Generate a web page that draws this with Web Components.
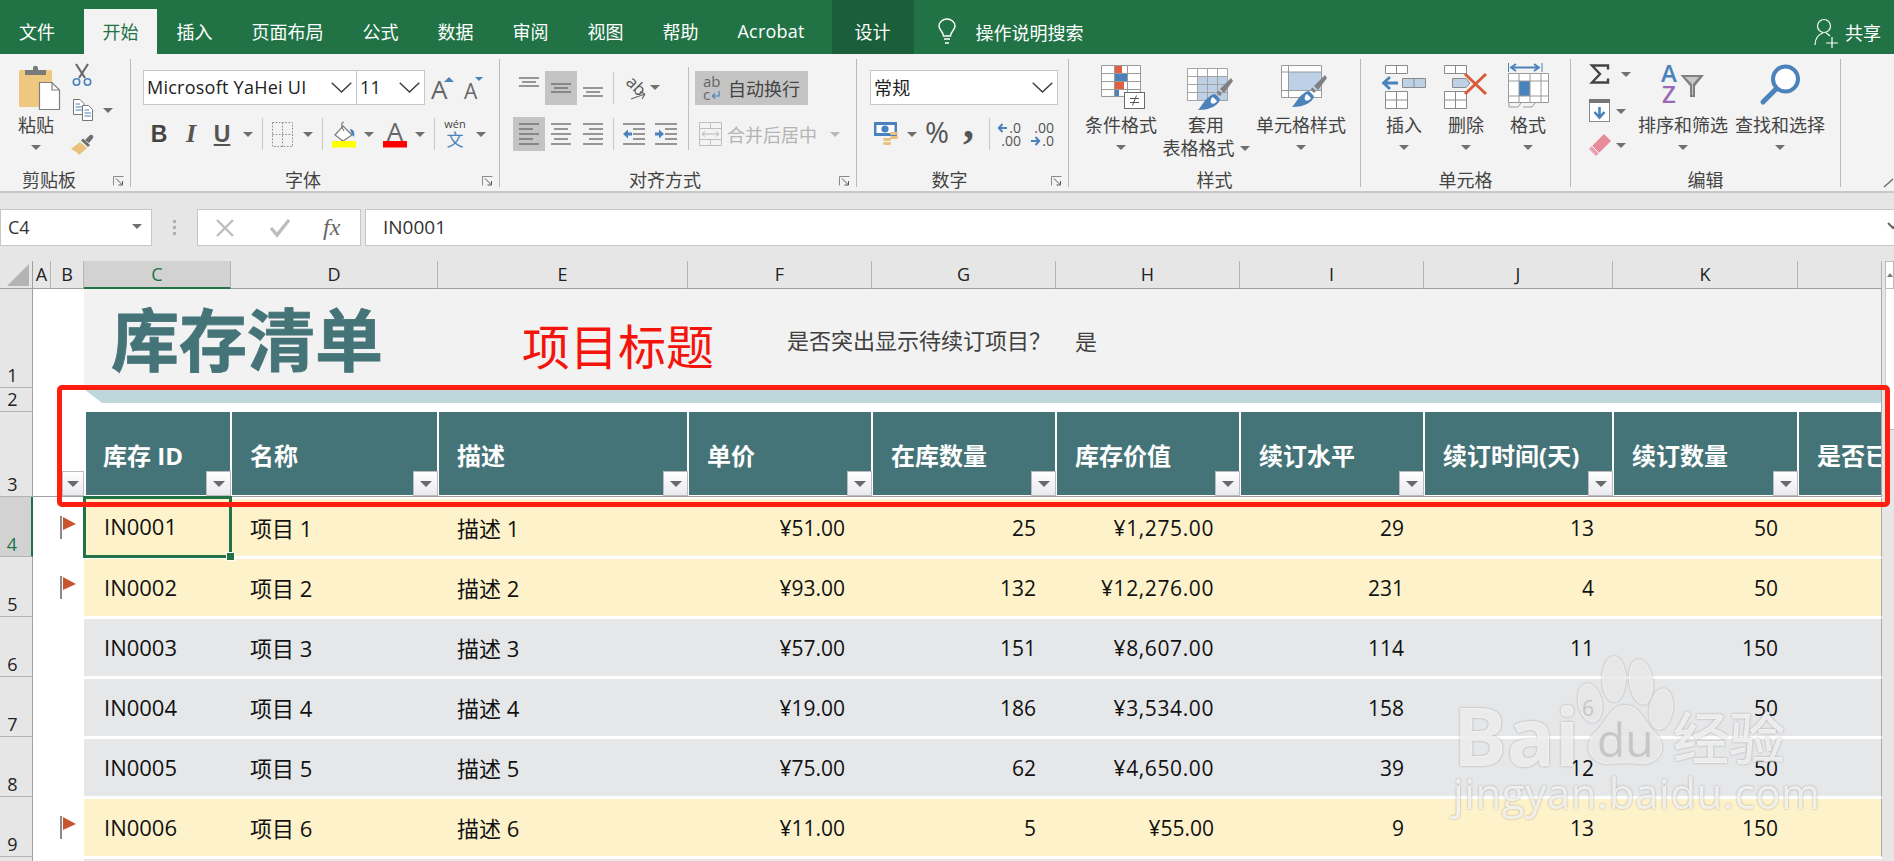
<!DOCTYPE html>
<html lang="zh-CN">
<head>
<meta charset="utf-8">
<title>库存清单</title>
<style>
  html, body { margin: 0; padding: 0; overflow: hidden; background: #fff; }
  body { width: 1894px; height: 861px; font-family: "Open Sans", "Noto Sans CJK SC", sans-serif; }
</style>
</head>
<body>
<xl-app></xl-app>
<script>
const FONT = `"Open Sans", "Noto Sans CJK SC", sans-serif`;
const BLUE = '#4a82bb';

const svg = (w, h, inner, style = '') =>
  `<svg xmlns="http://www.w3.org/2000/svg" width="${w}" height="${h}" viewBox="0 0 ${w} ${h}" style="display:block;flex:none;overflow:visible;${style}">${inner}</svg>`;

const lines = (rows) => rows.map(([x1, x2, y]) =>
  `<line x1="${x1}" x2="${x2}" y1="${y}" y2="${y}" stroke="#6e6e6e" stroke-width="1.4"/>`).join('');

const brush = `
  <path d="M44 10 L33 21 L37 25 L46 13 Z" fill="#808080"/>
  <path d="M31.5 22.5 L35 26 L33 28 L29.5 24.5 Z" fill="#808080"/>
  <path d="M28 26 L33 31 C32 37 24 42 11 42 C15 38 17 32 22 29 C24 27 26 26 28 26 Z" fill="${BLUE}"/>
  <path d="M26 29 L30 33 C28 36 26 36 24 35 C23 33 24 30 26 29 Z" fill="#fff"/>`;

const ICONS = {
  paste: svg(41, 45, `
    <rect x="0" y="5" width="33" height="37" rx="1.5" fill="#edc87e"/>
    <path d="M6 5 H14 V3 C14 0 19 0 19 3 V5 H27 V10 H6 Z" fill="#7a7a7a"/>
    <path d="M20.5 17.5 H33 L40.5 25 V44.5 H20.5 Z" fill="#fff" stroke="#7f7f7f" stroke-width="1.2"/>
    <path d="M33 17.5 V25 H40.5" fill="none" stroke="#7f7f7f" stroke-width="1.2"/>`),
  cut: svg(20, 22, `
    <path d="M4 0 L13 14 M16 0 L7 14" stroke="#6a6a6a" stroke-width="2.2" fill="none"/>
    <circle cx="4.5" cy="18" r="3.2" fill="none" stroke="${BLUE}" stroke-width="1.6"/>
    <circle cx="15.5" cy="18" r="3.2" fill="none" stroke="${BLUE}" stroke-width="1.6"/>`),
  copy: svg(20, 22, `
    <path d="M.5 .5 H7 L11 4.5 V15.5 H.5 Z" fill="#fff" stroke="#777"/>
    <path d="M2.5 5 H7 M2.5 8 H9 M2.5 11 H9" stroke="${BLUE}"/>
    <path d="M9.5 6.5 H15.5 L19.5 10.5 V21.5 H9.5 Z" fill="#fff" stroke="#777"/>
    <path d="M11.5 11 H16 M11.5 14 H18 M11.5 17 H18" stroke="${BLUE}"/>`),
  painter: svg(23, 21, `
    <path d="M9 8 L16 14 L8 21 C7 19 4 17 0 15 Z" fill="#e9c27c"/>
    <path d="M10 6.5 L17 13 L19 11 L12 4.5 Z" fill="#6e6e6e"/>
    <path d="M14 6 L19 1 C21 0 23 2 22 4 L18 9 Z" fill="#6e6e6e"/>`),
  launcher: svg(11, 10, `
    <path d="M.5 9.5 V.5 H10.5" fill="none" stroke="#8a8a8a"/>
    <path d="M3 2.5 L9 8.5 M9.5 5 V9 H5.5" fill="none" stroke="#555"/>`),
  chevron: svg(21, 11, `<path d="M.7 .7 L10.5 10 L20.3 .7" fill="none" stroke="#3a3a3a" stroke-width="1.4"/>`),
  grow: svg(24, 22, `<text x="0" y="22" font-family="Open Sans" font-size="26" fill="#666">A</text><path d="M13 5 L18 0 L23 5 Z" fill="${BLUE}"/>`),
  shrink: svg(20, 22, `<text x="0" y="22" font-family="Open Sans" font-size="21" fill="#666">A</text><path d="M11 0 H19 L15 4 Z" fill="${BLUE}"/>`),
  border: svg(21, 25, `<path d="M.5 .5 H20.5 V24.5 H.5 Z M10.5 .5 V24.5 M.5 12.5 H20.5" fill="none" stroke="#8a8a8a" stroke-dasharray="1.6 1.6"/>`),
  fill: svg(24, 25, `
    <path d="M11 4 L20 13 L11 19 L3 13 Z" fill="#fff" stroke="#7a7a7a" stroke-width="1.2"/>
    <path d="M12 0 C9 0 9 5 12 9" fill="none" stroke="#7a7a7a" stroke-width="1.2"/>
    <path d="M18 7 C22 7 23 11 22 15 C20 13 19 11 18 7 Z" fill="${BLUE}"/>
    <rect x="0" y="19" width="24" height="6.5" fill="#ffff00"/>`),
  color: svg(24, 25, `
    <text x="12" y="19" text-anchor="middle" font-family="Open Sans" font-size="26" fill="#666">A</text>
    <rect x="0" y="19" width="24" height="6.5" fill="#ff0000"/>`),
  wen: svg(24, 28, `
    <text x="12" y="8" text-anchor="middle" font-family="Open Sans" font-size="11" fill="#444">wén</text>
    <text x="12" y="26" text-anchor="middle" font-family="Noto Sans CJK SC" font-size="17" fill="${BLUE}">文</text>`),
  atop: svg(20, 10, lines([[0, 20, 1], [3, 17, 5], [0, 20, 9]])),
  amid: svg(20, 10, lines([[0, 20, 1], [3, 17, 5], [0, 20, 9]])),
  abot: svg(20, 10, lines([[0, 20, 1], [3, 17, 5], [0, 20, 9]])),
  left: svg(20, 22, lines([[0, 20, 1], [0, 14, 6], [0, 20, 11], [0, 14, 16], [0, 20, 21]])),
  center: svg(20, 22, lines([[0, 20, 1], [3, 17, 6], [0, 20, 11], [3, 17, 16], [0, 20, 21]])),
  right: svg(20, 22, lines([[0, 20, 1], [6, 20, 6], [0, 20, 11], [6, 20, 16], [0, 20, 21]])),
  orient: svg(24, 26, `
    <text x="2" y="8" transform="rotate(45 2 8)" font-family="Open Sans" font-size="17" fill="#555">ab</text>
    <path d="M8 24 L22 19 M22 19 L17 16.5 M22 19 L19 24" fill="none" stroke="#666" stroke-width="1.2"/>`),
  outdent: svg(22, 22, `${lines([[0, 22, 1], [10, 22, 6], [10, 22, 11], [10, 22, 16], [0, 22, 21]])}<path d="M0 11 L5 6.5 V9.5 H9 V12.5 H5 V15.5 Z" fill="${BLUE}"/>`),
  indent: svg(22, 22, `${lines([[0, 22, 1], [10, 22, 6], [10, 22, 11], [10, 22, 16], [0, 22, 21]])}<path d="M9 11 L4 6.5 V9.5 H0 V12.5 H4 V15.5 Z" fill="${BLUE}"/>`),
  wrap: svg(18, 24, `
    <text x="0" y="11" font-family="Open Sans" font-size="15" fill="#666">ab</text>
    <text x="0" y="24" font-family="Open Sans" font-size="15" fill="#666">c</text>
    <path d="M16 15 V20 H10 M12 17.5 L9.5 20 L12 22.5" fill="none" stroke="${BLUE}" stroke-width="1.2"/>`),
  merge: svg(23, 24, `
    <path d="M.5 .5 H22.5 V23.5 H.5 Z M.5 6.5 H22.5 M.5 17.5 H22.5 M11.5 .5 V6.5 M11.5 17.5 V23.5" fill="none" stroke="#c4bcc4"/>
    <path d="M3 12 H20 M6 9.5 L3 12 L6 14.5 M17 9.5 L20 12 L17 14.5" fill="none" stroke="#b8b8b8"/>`),
  money: svg(24, 24, `
    <rect x="0" y="0" width="23" height="14" fill="${BLUE}"/>
    <rect x="2.5" y="3" width="18" height="8" fill="#fff"/>
    <circle cx="11" cy="7" r="3.6" fill="${BLUE}"/>
    <g fill="#e8c27e"><rect x="16" y="10" width="8" height="3" rx="1.4"/><rect x="16" y="14" width="8" height="3" rx="1.4"/><rect x="9" y="16" width="8" height="3" rx="1.4"/><rect x="9" y="20" width="8" height="3" rx="1.4"/></g>`),
  decInc: svg(23, 24, `
    <text x="23" y="11" text-anchor="end" font-family="Open Sans" font-size="14" fill="#555">.0</text>
    <text x="23" y="24" text-anchor="end" font-family="Open Sans" font-size="14" fill="#555">.00</text>
    <path d="M9 6 H1 M4.5 2 L.8 6 L4.5 10" fill="none" stroke="${BLUE}" stroke-width="2"/>`),
  decDec: svg(23, 24, `
    <text x="23" y="11" text-anchor="end" font-family="Open Sans" font-size="14" fill="#555">.00</text>
    <text x="23" y="24" text-anchor="end" font-family="Open Sans" font-size="14" fill="#555">.0</text>
    <path d="M0 19 H8 M4.5 15 L8.2 19 L4.5 23" fill="none" stroke="${BLUE}" stroke-width="2"/>`),
  cond: svg(44, 44, `
    <rect x=".5" y=".5" width="39" height="31" fill="#fff"/>
    <rect x="13" y="0" width="8" height="8" fill="#e0603f"/><rect x="13" y="8" width="13" height="8" fill="${BLUE}"/>
    <rect x="13" y="16" width="10" height="8" fill="#e0603f"/><rect x="13" y="24" width="5" height="8" fill="${BLUE}"/>
    <path d="M.5 .5 H39.5 V31.5 H.5 Z M.5 8.5 H39.5 M.5 16.5 H39.5 M.5 24.5 H39.5 M13.5 .5 V31.5 M26.5 .5 V31.5" fill="none" stroke="#9a9a9a"/>
    <rect x="23.5" y="27.5" width="20" height="16" fill="#fff" stroke="#6a6a6a"/>
    <path d="M29 33.5 H38 M29 37.5 H38 M35.5 30.5 L31.5 40.5" stroke="#555" fill="none"/>`),
  table: svg(46, 44, `
    <rect x=".5" y=".5" width="40" height="32" fill="#fff"/>
    <rect x="11" y="8" width="30" height="25" fill="#bdd0e6"/>
    <path d="M.5 .5 H40.5 V32.5 H.5 Z M.5 8.5 H40.5 M.5 16.5 H40.5 M.5 24.5 H40.5 M10.5 .5 V32.5 M20.5 .5 V32.5 M30.5 .5 V32.5" fill="none" stroke="#a4a4a4"/>
    ${brush}`),
  cell: svg(46, 44, `
    <rect x=".5" y=".5" width="40" height="32" fill="#fff"/>
    <rect x="7" y="7" width="34" height="18" fill="#bdd0e6"/>
    <path d="M.5 .5 H40.5 V32.5 H.5 Z M.5 7 H40.5 M.5 25.5 H40.5 M7.5 .5 V32.5" fill="none" stroke="#9a9a9a"/>
    ${brush}`),
  insert: svg(44, 44, `
    <path d="M3.5 .5 H25.5 V8.5 H3.5 Z M14.5 .5 V8.5 M3.5 26.5 H25.5 V43.5 H3.5 Z M14.5 26.5 V43.5 M3.5 35 H25.5" fill="#fff" stroke="#8a8a8a"/>
    <path d="M20.5 13.5 H43.5 V22.5 H20.5 Z M32 13.5 V22.5" fill="#bdd0e6" stroke="#8a8a8a"/>
    <path d="M16 18 H2 M8 12 L1.5 18 L8 24" fill="none" stroke="${BLUE}" stroke-width="2.8"/>`),
  del: svg(44, 44, `
    <path d="M.5 .5 H22.5 V8.5 H.5 Z M11.5 .5 V8.5 M.5 26.5 H22.5 V43.5 H.5 Z M11.5 26.5 V43.5 M.5 35 H22.5" fill="#fff" stroke="#8a8a8a"/>
    <path d="M8.5 13.5 H22 L26 18 L22 22.5 H8.5 Z" fill="#bdd0e6" stroke="#8a8a8a"/>
    <path d="M21 9 L42 29 M42 9 L21 29" stroke="#d95b3a" stroke-width="3" fill="none"/>`),
  format: svg(41, 45, `
    <path d="M.5 0 V9 M34 0 V9" stroke="${BLUE}"/>
    <path d="M3 4.5 H31 M8 1 L3 4.5 L8 8 M26 1 L31 4.5 L26 8" fill="none" stroke="${BLUE}" stroke-width="1.8"/>
    <rect x=".5" y="10.5" width="40" height="29" fill="#fff"/>
    <rect x="11" y="18" width="11" height="15" fill="${BLUE}"/>
    <path d="M.5 10.5 H40.5 V39.5 H.5 Z M.5 18 H40.5 M.5 33 H40.5 M11 10.5 V39.5 M22 10.5 V39.5 M33 10.5 V39.5" fill="none" stroke="#9a9a9a"/>
    <path d="M1 40 V44 H10 L13 40 M15 44 H24 L27 40" fill="none" stroke="#9a9a9a"/>`),
  sum: svg(19, 20, `<path d="M18 5.5 V1.5 H2 L10 10 L2 18.5 H18 V14.5" fill="none" stroke="#444" stroke-width="2.4"/>`),
  filldown: svg(21, 23, `
    <rect x=".5" y=".5" width="20" height="22" fill="#fff" stroke="#8a8a8a"/>
    <rect x="0" y="0" width="21" height="4" fill="#777"/>
    <path d="M10.5 8 V18 M5.5 13 L10.5 18.5 L15.5 13" fill="none" stroke="${BLUE}" stroke-width="2.6"/>`),
  eraser: svg(22, 22, `
    <path d="M15 0 L22 7 L10 19 L3 12 Z" fill="#e88c9c"/>
    <path d="M3 12 L10 19 L7 22 L0 15 Z" fill="#eb9fad"/><path d="M3 12 L10 19" stroke="#fff"/>`),
  sort: svg(44, 40, `
    <text x="8" y="17" text-anchor="middle" font-family="Open Sans" font-size="24" font-weight="600" fill="${BLUE}">A</text>
    <text x="8" y="38" text-anchor="middle" font-family="Open Sans" font-size="24" font-weight="600" fill="#9a68b8">Z</text>
    <path d="M19.5 10 H43 L34 21 V32 H29 V21 Z" fill="#808080"/><path d="M24 12 H38 L32 19 V30 H31 V19 Z" fill="#c8c8c8"/>`),
  find: svg(40, 40, `
    <circle cx="25.5" cy="14" r="12.5" fill="#fff" stroke="${BLUE}" stroke-width="4"/>
    <path d="M16 24 L3 37" stroke="${BLUE}" stroke-width="5" stroke-linecap="round"/>`),
  bulb: svg(18, 28, `<path d="M5.5 18 C5 13 1 12 1 8 C1 4 5 1 9 1 C13 1 17 4 17 8 C17 12 13 13 12.5 18 Z M6 21 H12 M7 25 H11" fill="none" stroke="#fff" stroke-width="1.5"/>`),
  person: svg(24, 28, `<circle cx="10" cy="8" r="6.5" fill="none" stroke="#fff" stroke-width="1.2"/><path d="M1 27 C1 20 5 16 9 15 M12 15 C14 16 15 17 16 18 M18 19 V30 M12 25 H24" fill="none" stroke="#fff" stroke-width="1.2"/>`),
  flag: svg(16, 23, `<rect x="0" y="0" width="2" height="23" fill="#8a8a8a"/><path d="M3 1 L16 8 L3 14 Z" fill="#c9552f"/>`),
  corner: svg(22, 22, `<path d="M22 0 V22 H0 Z" fill="#b4b4b4"/>`),
  collapse: svg(10, 8, `<path d="M0 8 L9 0" stroke="#666" stroke-width="1.4" fill="none"/>`),
};

class XlIcon extends HTMLElement {
  constructor() {
    super();
    this.attachShadow({ mode: 'open' });
  }

  connectedCallback() {
    this.shadowRoot.innerHTML = `
      <style>:host { display: flex; flex: none; align-items: center; justify-content: center; }</style>
      ${ICONS[this.getAttribute('name')] || ''}`;
  }
}
customElements.define('xl-icon', XlIcon);

class XlCaret extends HTMLElement {
  constructor() {
    super();
    this.attachShadow({ mode: 'open' }).innerHTML = `
      <style>
        :host { display: inline-flex; flex: none; align-items: center; justify-content: center; }
        i { display: block; width: 0; height: 0; border: 5px solid transparent; border-bottom: 0; border-top: 5px solid #707070; }
      </style>
      <i></i>`;
  }
}
customElements.define('xl-caret', XlCaret);

class XlGroup extends HTMLElement {
  constructor() {
    super();
    this.attachShadow({ mode: 'open' });
  }

  connectedCallback() {
    const launcher = this.hasAttribute('launcher');
    const pad = this.getAttribute('pad') || (launcher ? 26 : 0);
    this.shadowRoot.innerHTML = `
      <style>
        :host { display: flex; flex: none; flex-direction: column; position: relative; box-sizing: border-box; height: 128px; border-right: 1px solid #b9b9b9; }
        .body { flex: none; height: 114px; }
        .label { height: 14px; line-height: 14px; text-align: center; font-size: 18px; color: #444; white-space: nowrap; padding-right: ${pad}px; }
        xl-icon { position: absolute; right: 6px; bottom: 1px; }
      </style>
      <div class="body"><slot></slot></div>
      <div class="label">${this.getAttribute('label') || ''}</div>
      ${launcher ? '<xl-icon name="launcher"></xl-icon>' : ''}`;
  }
}
customElements.define('xl-group', XlGroup);

class XlBig extends HTMLElement {
  constructor() {
    super();
    this.attachShadow({ mode: 'open' });
  }

  connectedCallback() {
    const second = this.getAttribute('second');
    this.shadowRoot.innerHTML = `
      <style>
        :host { display: flex; flex: none; flex-direction: column; align-items: center; font-size: 18px; color: #444; white-space: nowrap; }
        .icon { height: 58px; box-sizing: border-box; padding-top: 6px; }
        .text { height: 16px; line-height: 16px; }
        .second { height: 16px; line-height: 16px; margin-top: 7px; display: flex; align-items: center; }
        .second xl-caret { margin-left: 5px; }
        .solo { margin-top: 12px; height: 5px; }
      </style>
      <div class="icon"><slot></slot></div>
      <div class="text">${this.getAttribute('label')}</div>
      ${second ? `<div class="second">${second}<xl-caret></xl-caret></div>` : '<xl-caret class="solo"></xl-caret>'}`;
  }
}
customElements.define('xl-big', XlBig);

class XlSelect extends HTMLElement {
  constructor() {
    super();
    this.attachShadow({ mode: 'open' });
  }

  connectedCallback() {
    this.shadowRoot.innerHTML = `
      <style>
        :host { display: flex; flex: none; box-sizing: border-box; height: 35px; align-items: center; justify-content: space-between; background: #fff; border: 1px solid #c6c6c6; padding: 0 4px 0 3px; font-size: 18px; color: #222; white-space: nowrap; }
        span { letter-spacing: .25px; margin-top: -2px; }
      </style>
      <span>${this.getAttribute('value')}</span><xl-icon name="chevron"></xl-icon>`;
  }
}
customElements.define('xl-select', XlSelect);

class XlTabs extends HTMLElement {
  constructor() {
    super();
    this.attachShadow({ mode: 'open' }).innerHTML = `
      <style>
        :host { display: flex; flex: none; height: 54px; background: #217346; color: #fff; font-size: 18px; white-space: nowrap; }
        .tab { display: flex; align-items: center; height: 45px; margin-top: 9px; padding: 0 19.5px 2px; box-sizing: border-box; }
        .first { padding-left: 19px; padding-right: 29px; }
        .active { background: #f3f3f3; color: #217346; padding: 0 18.5px 2px; }
        .acro { letter-spacing: .2px; }
        .design { height: 54px; margin: 0 0 0 4px; padding: 9px 23px 2px; background: #1b5e3a; }
        .help { display: flex; align-items: center; height: 45px; margin: 9px 0 0 24px; }
        .help span { margin-left: 20px; }
        .share { display: flex; align-items: center; height: 45px; margin: 9px 13px 0 auto; }
        .share span { margin-left: 7px; }
      </style>
      <div class="tab first">文件</div>
      <div class="tab active">开始</div>
      <div class="tab">插入</div>
      <div class="tab">页面布局</div>
      <div class="tab">公式</div>
      <div class="tab">数据</div>
      <div class="tab">审阅</div>
      <div class="tab">视图</div>
      <div class="tab">帮助</div>
      <div class="tab acro" style="padding-right:23px">Acrobat</div>
      <div class="tab design">设计</div>
      <div class="help"><xl-icon name="bulb"></xl-icon><span>操作说明搜索</span></div>
      <div class="share"><xl-icon name="person"></xl-icon><span>共享</span></div>`;
  }
}
customElements.define('xl-tabs', XlTabs);

class XlRibbon extends HTMLElement {
  constructor() {
    super();
    this.attachShadow({ mode: 'open' }).innerHTML = `
      <style>
        :host { display: flex; flex: none; box-sizing: border-box; height: 139px; padding-top: 5px; background: #f3f3f3; border-bottom: 2px solid #c8c8c8; }
        .row { display: flex; align-items: center; }
        .r1 { margin-top: 11px; height: 35px; }
        .r2 { margin-top: 12px; height: 34px; }
        .col { display: flex; flex-direction: column; }
        .sep { flex: none; width: 1px; height: 32px; background: #c8c8c8; }
        .tall { align-self: flex-start; height: 49px; margin-top: -3px; background: #c0c0c0; }
        .tall2 { background: #c0c0c0; height: 36px; margin-top: -4px; }
        .cell { display: flex; flex: none; align-items: center; justify-content: center; height: 34px; }
        .on { background: #c4c4c4; }
        .txt { display: flex; flex: none; align-items: center; font-size: 18px; color: #444; white-space: nowrap; }
        .glyph { display: flex; flex: none; align-items: center; justify-content: center; color: #444; }
        .flexrow { display: flex; }
        .small { display: flex; align-items: center; height: 35px; }
      </style>

      <xl-group label="剪贴板" launcher pad="32" style="width:131px">
        <div class="flexrow">
          <xl-big label="粘贴" style="width:72px"><xl-icon name="paste" style="margin-left:7px"></xl-icon></xl-big>
          <div class="col" style="padding-top:5px">
            <div class="small" style="align-items:flex-start"><xl-icon name="cut"></xl-icon></div>
            <div class="small" style="align-items:flex-start;margin-left:1px"><xl-icon name="copy"></xl-icon><xl-caret style="width:10px;margin:9px 0 0 10px"></xl-caret></div>
            <div class="small" style="align-items:flex-start;margin-left:-1px"><xl-icon name="painter"></xl-icon></div>
          </div>
        </div>
      </xl-group>

      <xl-group label="字体" launcher pad="24" style="width:369px">
        <div class="row r1" style="margin-left:12px">
          <xl-select value="Microsoft YaHei UI" style="width:214px"></xl-select>
          <xl-select value="11" style="width:69px;margin-left:-1px"></xl-select>
          <xl-icon name="grow" style="margin-left:6px"></xl-icon>
          <xl-icon name="shrink" style="margin-left:9px"></xl-icon>
        </div>
        <div class="row r2" style="margin-left:12px">
          <div class="glyph" style="width:32px;font:700 23px 'Liberation Sans',sans-serif">B</div>
          <div class="glyph" style="width:32px;font:italic 700 26px 'Liberation Serif',serif;color:#555">I</div>
          <div class="glyph" style="width:30px;font:700 23px 'Liberation Sans',sans-serif;text-decoration:underline;color:#555">U</div>
          <xl-caret style="width:22px"></xl-caret>
          <div class="sep" style="margin-left:3px"></div>
          <xl-icon name="border" style="margin-left:9px"></xl-icon>
          <xl-caret style="width:29px"></xl-caret>
          <div class="sep"></div>
          <xl-icon name="fill" style="margin-left:9px"></xl-icon>
          <xl-caret style="width:26px"></xl-caret>
          <xl-icon name="color" style="margin-left:1px"></xl-icon>
          <xl-caret style="width:26px"></xl-caret>
          <div class="sep" style="margin-left:1px"></div>
          <xl-icon name="wen" style="margin-left:8px"></xl-icon>
          <xl-caret style="width:28px"></xl-caret>
        </div>
      </xl-group>

      <xl-group label="对齐方式" launcher style="width:357px">
        <div class="row r1" style="margin-left:13px">
          <div class="cell" style="width:32px;align-items:flex-start;padding-top:6px;box-sizing:border-box"><xl-icon name="atop"></xl-icon></div>
          <div class="cell on" style="width:32px"><xl-icon name="amid"></xl-icon></div>
          <div class="cell" style="width:32px;align-items:flex-end;padding-bottom:8px;box-sizing:border-box"><xl-icon name="abot"></xl-icon></div>
          <div class="sep" style="margin-left:4px"></div>
          <div class="cell" style="width:30px;margin-left:6px"><xl-icon name="orient"></xl-icon></div>
          <xl-caret style="width:10px"></xl-caret>
          <div class="sep tall" style="margin-left:28px"></div>
          <div class="cell on txt" style="width:113px;margin-left:6px;justify-content:flex-start"><xl-icon name="wrap" style="margin-left:8px"></xl-icon><span style="margin-left:7px">自动换行</span></div>
        </div>
        <div class="row r2" style="margin-left:13px">
          <div class="cell on" style="width:32px"><xl-icon name="left"></xl-icon></div>
          <div class="cell" style="width:32px"><xl-icon name="center"></xl-icon></div>
          <div class="cell" style="width:32px"><xl-icon name="right"></xl-icon></div>
          <div class="sep" style="margin-left:4px"></div>
          <div class="cell" style="width:32px;margin-left:4px"><xl-icon name="outdent"></xl-icon></div>
          <div class="cell" style="width:32px"><xl-icon name="indent"></xl-icon></div>
          <div class="sep tall2" style="margin-left:6px"></div>
          <xl-icon name="merge" style="margin-left:10px"></xl-icon>
          <div class="txt" style="margin-left:5px;width:90px;color:#b4b4b4">合并后居中</div>
          <xl-caret style="width:36px;opacity:.45"></xl-caret>
        </div>
      </xl-group>

      <xl-group label="数字" launcher style="width:212px">
        <div class="row r1" style="margin-left:13px">
          <xl-select value="常规" style="width:188px"></xl-select>
        </div>
        <div class="row r2" style="margin-left:17px">
          <xl-icon name="money"></xl-icon>
          <xl-caret style="width:27px"></xl-caret>
          <div class="glyph" style="width:20px;margin-left:2px;padding-bottom:5px;font:29px 'Open Sans',sans-serif;color:#555">%</div>
          <div class="glyph" style="width:9px;margin-left:17px;font:700 44px/14px 'Liberation Serif',serif;color:#555;height:34px;align-items:flex-start">,</div>
          <div class="sep" style="margin-left:16px"></div>
          <xl-icon name="decInc" style="margin-left:8px"></xl-icon>
          <xl-icon name="decDec" style="margin-left:10px"></xl-icon>
        </div>
      </xl-group>

      <xl-group label="样式" style="width:292px">
        <div class="flexrow" style="margin-left:8px">
          <xl-big label="条件格式" style="width:88px"><xl-icon name="cond" style="margin-left:4px"></xl-icon></xl-big>
          <xl-big label="套用" second="表格格式" style="width:82px"><xl-icon name="table" style="margin:3px 0 0 8px"></xl-icon></xl-big>
          <xl-big label="单元格样式" style="width:100px;margin-left:4px"><xl-icon name="cell" style="margin-left:5px"></xl-icon></xl-big>
        </div>
      </xl-group>

      <xl-group label="单元格" style="width:210px">
        <div class="flexrow" style="margin-left:12px">
          <xl-big label="插入" style="width:62px"><xl-icon name="insert"></xl-icon></xl-big>
          <xl-big label="删除" style="width:62px"><xl-icon name="del"></xl-icon></xl-big>
          <xl-big label="格式" style="width:62px"><xl-icon name="format" style="margin:-2px 0 0 0"></xl-icon></xl-big>
        </div>
      </xl-group>

      <xl-group label="编辑" style="width:270px">
        <div class="flexrow" style="margin-left:18px">
          <div class="col" style="width:49px;padding-top:5px">
            <div class="small" style="align-items:flex-start"><xl-icon name="sum" style="margin-left:1px"></xl-icon><xl-caret style="width:10px;margin:8px 0 0 12px"></xl-caret></div>
            <div class="small" style="align-items:flex-start"><xl-icon name="filldown"></xl-icon><xl-caret style="width:10px;margin:10px 0 0 6px"></xl-caret></div>
            <div class="small" style="align-items:flex-start"><xl-icon name="eraser"></xl-icon><xl-caret style="width:10px;margin:9px 0 0 5px"></xl-caret></div>
          </div>
          <xl-big label="排序和筛选" style="width:90px"><xl-icon name="sort" style="margin-left:-1px"></xl-icon></xl-big>
          <xl-big label="查找和选择" style="width:90px;margin-left:7px"><xl-icon name="find"></xl-icon></xl-big>
        </div>
      </xl-group>

      <div style="flex:1;display:flex;align-items:flex-end;justify-content:flex-end;height:128px"><xl-icon name="collapse"></xl-icon></div>`;
  }
}
customElements.define('xl-ribbon', XlRibbon);

class XlFormula extends HTMLElement {
  constructor() {
    super();
    this.attachShadow({ mode: 'open' }).innerHTML = `
      <style>
        :host { display: flex; flex: none; box-sizing: border-box; height: 68px; padding: 16px 0 15px; background: #e6e6e6; font-size: 18px; color: #333; }
        .box { display: flex; align-items: center; box-sizing: border-box; height: 37px; background: #fff; border: 1px solid #c6c6c6; }
        .name { width: 152px; padding: 0 9px 2px 7px; justify-content: space-between; }
        .dots { width: 45px; display: flex; flex-direction: column; align-items: center; justify-content: center; gap: 3px; margin-left: 0; }
        .dots i { display: block; width: 3px; height: 3px; background: #b0b0b0; }
        .btns { width: 164px; }
        .fx { font: italic 24px "Liberation Serif", serif; color: #666; margin-left: 33px; }
        .input { flex: 1; margin-left: 4px; padding: 0 0 2px 17px; justify-content: space-between; border-right: 0; }
        .input span { font-size: 19px; }
      </style>
      <div class="box name"><span>C4</span><xl-caret></xl-caret></div>
      <div class="dots"><i></i><i></i><i></i></div>
      <div class="box btns">
        ${svg(18, 18, '<path d="M1 1 L17 17 M17 1 L1 17" stroke="#bdbdbd" stroke-width="2.4" fill="none"/>', 'margin-left:18px')}
        ${svg(20, 18, '<path d="M1 9 L7 16 L19 1" stroke="#bdbdbd" stroke-width="3.4" fill="none"/>', 'margin-left:36px')}
        <span class="fx">fx</span>
      </div>
      <div class="box input"><span>IN0001</span>${svg(6, 10, '<path d="M0 1 L5 6 L10 1" stroke="#666" stroke-width="2" fill="none"/>')}</div>`;
  }
}
customElements.define('xl-formula', XlFormula);

const WIDTHS = [33, 18, 33, 147, 207, 250, 184, 184, 184, 184, 189, 185, 84, 12];
const COLS = ['A', 'B', 'C', 'D', 'E', 'F', 'G', 'H', 'I', 'J', 'K', ''];
const HEADS = ['库存 ID', '名称', '描述', '单价', '在库数量', '库存价值', '续订水平', '续订时间(天)', '续订数量', '是否已'];
const ROWS = [
  ['IN0001', '项目 1', '描述 1', '¥51.00', '25', '¥1,275.00', '29', '13', '50', 1],
  ['IN0002', '项目 2', '描述 2', '¥93.00', '132', '¥12,276.00', '231', '4', '50', 1],
  ['IN0003', '项目 3', '描述 3', '¥57.00', '151', '¥8,607.00', '114', '11', '150', 0],
  ['IN0004', '项目 4', '描述 4', '¥19.00', '186', '¥3,534.00', '158', '6', '50', 0],
  ['IN0005', '项目 5', '描述 5', '¥75.00', '62', '¥4,650.00', '39', '12', '50', 0],
  ['IN0006', '项目 6', '描述 6', '¥11.00', '5', '¥55.00', '9', '13', '150', 1],
];
const RIGHT_PAD = { 3: 27, 4: 20, 5: 26, 6: 20, 7: 19, 8: 20 };

class XlSheet extends HTMLElement {
  constructor() {
    super();
    this.attachShadow({ mode: 'open' });
    this.shadowRoot.innerHTML = `
      <style>
        :host { display: grid; flex: none; position: relative; height: 600px; background: #fff; color: #111; font-size: 21px;
          grid-template-columns: ${WIDTHS.map(w => w + 'px').join(' ')};
          grid-template-rows: 28px 99px 24px 85px repeat(6, 60px) 4px; }
        div { box-sizing: border-box; min-width: 0; }
        .ch { display: flex; align-items: center; justify-content: center; background: #e6e6e6; border-right: 1px solid #b4b4b4; border-bottom: 1px solid #a0a0a0; font-size: 18px; color: #222; padding-bottom: 1px; }
        .ch.on { background: #d2d2d2; color: #217346; border-bottom: 2px solid #217346; }
        .corner { display: flex; align-items: flex-end; justify-content: flex-end; padding: 0 3px 2px 0; background: #e6e6e6; border-right: 1px solid #a0a0a0; border-bottom: 1px solid #a0a0a0; }
        .rh { display: flex; align-items: flex-end; justify-content: center; background: #e6e6e6; border-right: 1px solid #a0a0a0; border-bottom: 1px solid #b4b4b4; font-size: 18px; line-height: 23px; color: #222; padding-right: 7px; }
        .rh.on { background: #d2d2d2; color: #217346; border-right: 2px solid #217346; }
        .title { grid-column: 4 / 14; display: flex; align-items: center; background: #f2f2f2; border-right: 1px solid #a8a8a8; white-space: nowrap; }
        .title b { margin-left: 27px; font-size: 68px; line-height: 80px; color: #457478; font-weight: 700; margin-top: 2px; -webkit-text-stroke: .8px #457478; }
        .title .sub { margin-left: 139px; font-size: 48px; color: #f5140c; margin-top: 10px; }
        .title .q { margin-left: 73px; font-size: 22px; color: #404040; }
        .title .a { margin-left: 24px; font-size: 22px; color: #404040; margin-top: 3px; }
        .band { grid-column: 4 / 14; background: #fff; border-right: 1px solid #a8a8a8; }
        .band i { display: block; height: 14px; margin-top: 1px; background: #bdd7da; clip-path: polygon(0 0, 100% 0, 100% 100%, 18px 100%); }
        .hblank { border-bottom: 1px solid #a0a0a0; position: relative; }
        .hwrap { position: relative; border-bottom: 1px solid #a0a0a0; padding: 0 1px 1px 1px; background: #fff; }
        .hwrap.last { padding-right: 0; border-right: 1px solid #a8a8a8; }
        .hcell { display: flex; height: 100%; align-items: center; padding: 2px 0 0 18px; background: #457478; color: #fff; font-size: 24px; font-weight: 700; white-space: nowrap; overflow: hidden; }
        .hcell.first { margin-left: 1px; padding-left: 17px; }
        .filter { position: absolute; right: 0; bottom: 0; width: 25px; height: 25px; background: linear-gradient(#fff, #e9e9f0); border: 1px solid #bcbcbc; display: flex; align-items: center; justify-content: center; z-index: 1; }
        .filter i { display: block; width: 0; height: 0; border: 6px solid transparent; border-bottom: 0; border-top: 6px solid #6a6a6a; }
        .blank { display: flex; align-items: center; }
        .c { display: flex; align-items: center; white-space: nowrap; border-top: 2px solid #fff; border-bottom: 1px solid #fff; padding: 0 0 0 19px; position: relative; }
        .t { font-size: 22px; padding-bottom: 2px; }
        .y { background: #fef2cb; }
        .g { background: #e6e7e9; }
        .r { justify-content: flex-end; padding-left: 0; }
        .wide { letter-spacing: .6px; }
        .last { border-right: 1px solid #a8a8a8; }
        .sel { outline: 3px solid #217346; outline-offset: -2px; border: 0; z-index: 2; padding-bottom: 3px; }
        .sel i { position: absolute; right: -4px; bottom: -4px; width: 7px; height: 7px; background: #217346; border: 1px solid #fff; }
        .scroll { grid-column: 14; grid-row: 1 / -1; display: flex; flex-direction: column; background: #e6e6e6; }
        .sup { flex: none; height: 28px; margin-left: 3px; background: #fff; border: 1px solid #bbb; display: flex; align-items: center; justify-content: center; }
        .sup i { display: block; width: 0; height: 0; border: 3px solid transparent; border-top: 0; border-bottom: 4px solid #777; }
        .sth { flex: none; height: 141px; margin-left: 3px; background: #fff; border-left: 1px solid #ccc; border-bottom: 1px solid #bbb; }
        .frame { position: absolute; left: 57px; top: 124px; width: 1833px; height: 122px; box-sizing: border-box; border: 5px solid #ff1e0f; border-radius: 5px; z-index: 3; pointer-events: none; }
      </style>`;
    this.build();
  }

  build() {
    let html = '<div class="corner">' + ICONS.corner + '</div>';
    COLS.forEach(c => {
      html += `<div class="ch${c === 'C' ? ' on' : ''}">${c}</div>`;
    });
    html += '<div class="scroll"><div class="sup"><i></i></div><div class="sth"></div></div>';

    // top rows
    html += '<div class="rh">1</div><div></div><div></div>';
    html += '<div class="title"><b>库存清单</b><span class="sub">项目标题</span><span class="q">是否突出显示待续订项目？</span><span class="a">是</span></div>';
    html += '<div class="rh">2</div><div></div><div></div><div class="band"><i></i></div>';
    html += '<div class="rh">3</div><div class="hblank"></div><div class="hblank"><div class="filter" style="width:22px"><i></i></div></div>';
    HEADS.forEach((h, i) => {
      const last = i === HEADS.length - 1;
      html += `<div class="hwrap${last ? ' last' : ''}"><div class="hcell${i === 0 ? ' first' : ''}">${h}</div>${last ? '' : '<div class="filter"><i></i></div>'}</div>`;
    });

    // data rows
    ROWS.forEach((r, n) => {
      const cls = r[9] ? 'y' : 'g';
      html += `<div class="rh${n === 0 ? ' on' : ''}">${n + 4}</div><div></div>`;
      html += `<div class="blank" style="padding-left:9px">${r[9] ? ICONS.flag : ''}</div>`;
      html += `<div class="c t ${cls}${n === 0 ? ' sel' : ''}" style="padding-left:20px">${r[0]}${n === 0 ? '<i></i>' : ''}</div>`;
      html += `<div class="c t ${cls}">${r[1]}</div><div class="c t ${cls}">${r[2]}</div>`;
      for (let k = 3; k < 9; k++) {
        const wide = String(r[k]).includes(',') ? ' wide' : '';
        html += `<div class="c r ${cls}${wide}" style="padding-right:${RIGHT_PAD[k]}px">${r[k]}</div>`;
      }
      html += `<div class="c ${cls} last"></div>`;
    });

    // sliver of row 10
    html += '<div class="rh" style="border:0;border-right:1px solid #a0a0a0"></div><div></div><div></div>';
    html += '<div class="g" style="grid-column:4 / 14;border-top:2px solid #fff"></div>';

    html += '<div class="frame"></div>';
    this.shadowRoot.innerHTML += html;
  }
}
customElements.define('xl-sheet', XlSheet);

class XlWatermark extends HTMLElement {
  constructor() {
    super();
    this.attachShadow({ mode: 'open' }).innerHTML = `
      <style>
        :host { position: absolute; left: 1453px; top: 656px; width: 340px; height: 164px; z-index: 4; pointer-events: none; color: rgba(255,255,255,.78); font-family: "Open Sans", "Noto Sans CJK SC", sans-serif; white-space: nowrap; filter: drop-shadow(0 0 1px rgba(90,90,90,.6)); display: grid; grid-template-rows: 112px 52px; grid-template-columns: 114px 106px 120px; }
        .bai { grid-column: 1; align-self: end; font-size: 80px; line-height: 66px; font-weight: 700; }
        .paw { grid-column: 2; position: relative; left: 8px; top: 4px; }
        .paw span { position: absolute; left: 22px; top: 56px; font-size: 46px; line-height: 46px; color: rgba(130,130,130,.32); }
        .jing { grid-column: 3; align-self: end; font-size: 56px; line-height: 62px; font-weight: 500; }
        .url { grid-column: 1 / 4; font-size: 42px; line-height: 50px; letter-spacing: .6px; }
      </style>
      <div class="bai">Bai</div>
      <div class="paw">${svg(100, 108, `
        <g fill="rgba(255,255,255,.72)">
        <ellipse cx="15" cy="43" rx="12" ry="20" transform="rotate(-12 15 43)"/>
        <ellipse cx="39" cy="19" rx="12" ry="23"/>
        <ellipse cx="66" cy="22" rx="12" ry="23" transform="rotate(-8 66 22)"/>
        <ellipse cx="86" cy="49" rx="12" ry="21" transform="rotate(8 86 49)"/>
        <path d="M50 45 C67 45 69 64 81 73 C96 90 82 106 65 104 C57 103 44 103 36 104 C19 106 5 90 19 73 C31 64 34 45 50 45 Z"/>
        </g>`)}<span>du</span></div>
      <div class="jing">经验</div>
      <div class="url">jingyan.baidu.com</div>`;
  }
}
customElements.define('xl-watermark', XlWatermark);

class XlApp extends HTMLElement {
  constructor() {
    super();
    this.attachShadow({ mode: 'open' }).innerHTML = `
      <style>
        :host { display: flex; flex-direction: column; position: relative; width: 1894px; height: 861px; overflow: hidden; font-family: ${FONT}; }
      </style>
      <xl-tabs></xl-tabs>
      <xl-ribbon></xl-ribbon>
      <xl-formula></xl-formula>
      <xl-sheet></xl-sheet>
      <xl-watermark></xl-watermark>`;
  }
}
customElements.define('xl-app', XlApp);
</script>
</body>
</html>
